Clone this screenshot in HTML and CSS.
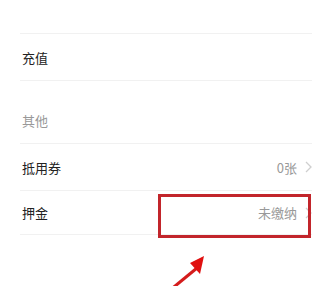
FILE: index.html
```html
<!DOCTYPE html>
<html lang="zh-CN">
<head>
  <meta charset="UTF-8">
  <title>钱包</title>
  <link rel="stylesheet" href="styles.css">
</head>
<body>
  <div class="list">
    <div class="spacer"></div>

    <div class="row">
      <span class="label">充值</span>
    </div>

    <div class="section-title">其他</div>

    <div class="row">
      <span class="label">抵用券</span>
      <span class="value">0张
        <svg class="chevron" width="7" height="12" viewBox="0 0 7 12"><polyline points="1,1 6,6 1,11" fill="none" stroke="#cfcfcf" stroke-width="1.3"/></svg>
      </span>
    </div>

    <div class="row last">
      <span class="label">押金</span>
      <span class="value">未缴纳
        <svg class="chevron" width="7" height="12" viewBox="0 0 7 12"><polyline points="1,1 6,6 1,11" fill="none" stroke="#cfcfcf" stroke-width="1.3"/></svg>
      </span>
    </div>
  </div>

  <!-- annotation overlay -->
  <div class="highlight"></div>
  <svg class="arrow" width="60" height="40" viewBox="0 0 60 40">
    <line x1="4" y1="40" x2="38" y2="12" stroke="#d41c1c" stroke-width="3"/>
    <polygon points="45,0 31,7 41,18" fill="#e01010"/>
  </svg>
</body>
</html>
```

FILE: styles.css
```css
body {
  margin: 0;
  background-color: #fff;
  font-family: "Noto Sans CJK SC", "Noto Sans", sans-serif;
  font-size: 13px;
  color: #222;
}

.list {
  padding: 0 17px 0 20px;
}

.spacer {
  height: 33px;
  border-bottom: 1px solid #f1f1f1;
}

.row {
  display: flex;
  align-items: center;
  justify-content: space-between;
  height: 46px;
  padding-left: 2px;
  border-bottom: 1px solid #f1f1f1;
}

.row.last {
  height: 43px;
}

.section-title {
  height: 63px;
  display: flex;
  align-items: flex-end;
  padding: 0 0 13px 2px;
  box-sizing: border-box;
  color: #999;
  border-bottom: 1px solid #f1f1f1;
}

.value {
  display: flex;
  align-items: center;
  color: #999;
}

.chevron {
  margin-left: 8px;
}

.highlight {
  position: absolute;
  left: 158px;
  top: 194px;
  width: 147px;
  height: 38px;
  border: 3px solid #c2252b;
}

.arrow {
  position: absolute;
  left: 159px;
  top: 256px;
}
```
